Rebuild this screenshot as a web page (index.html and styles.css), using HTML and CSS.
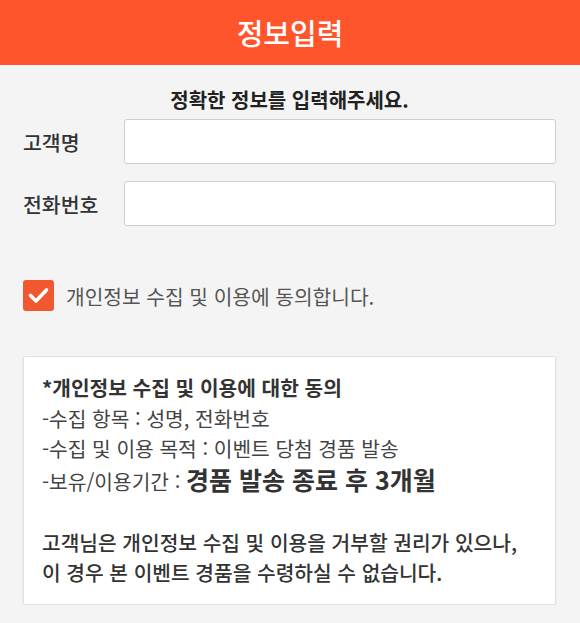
FILE: index.html
```html
<!DOCTYPE html>
<html lang="ko">
<head>
<meta charset="utf-8">
<title>정보입력</title>
<link rel="stylesheet" href="styles.css">
</head>
<body>
<header class="topbar"><h1 class="title">정보입력</h1></header>
<main class="content">
  <p class="subtitle">정확한 정보를 입력해주세요.</p>
  <div class="form">
    <label class="row">
      <span class="label">고객명</span>
      <input class="field" type="text">
    </label>
    <label class="row">
      <span class="label">전화번호</span>
      <input class="field" type="tel">
    </label>
  </div>
  <div class="agree">
    <span class="checkbox">
      <svg width="31" height="31" viewBox="0 0 31 31"><path d="M7.5 15.5 L13 21 L23.5 10" fill="none" stroke="#fff" stroke-width="3.6" stroke-linecap="round" stroke-linejoin="round"/></svg>
    </span>
    <span class="agree-text">개인정보 수집 및 이용에 동의합니다.</span>
  </div>
  <section class="notice">
    <p class="notice-title">*개인정보 수집 및 이용에 대한 동의</p>
    <p class="line">-수집 항목 : 성명, 전화번호</p>
    <p class="line">-수집 및 이용 목적 : 이벤트 당첨 경품 발송</p>
    <p class="line">-보유/이용기간 : <strong class="big">경품 발송 종료 후 3개월</strong></p>
    <p class="line blank">&nbsp;</p>
    <p class="line strong">고객님은 개인정보 수집 및 이용을 거부할 권리가 있으나,</p>
    <p class="line strong">이 경우 본 이벤트 경품을 수령하실 수 없습니다.</p>
  </section>
</main>
</body>
</html>
```
FILE: styles.css
```css
* { box-sizing: border-box; }
html, body {
  margin: 0;
  padding: 0;
  background: #f4f4f4;
  font-family: "Noto Sans CJK KR", "Noto Sans", sans-serif;
  color: #333;
}
.topbar {
  background: #ff552d;
  height: 65px;
  display: flex;
  align-items: center;
  justify-content: center;
}
.title {
  margin: 0;
  color: #fff;
  font-size: 29px;
  font-weight: 500;
  line-height: 1;
}
.content {
  padding: 0 24px 0 23px;
}
.subtitle {
  margin: 0;
  padding-top: 21px;
  text-align: center;
  font-size: 20px;
  font-weight: 700;
  color: #222;
  line-height: 28px;
}
.form {
  margin-top: 5px;
  display: flex;
  flex-direction: column;
  gap: 17px;
}
.row {
  display: flex;
  align-items: center;
}
.label {
  width: 101px;
  font-size: 20.5px;
  font-weight: 500;
  color: #333;
}
.field {
  flex: 1;
  height: 45px;
  border: 1px solid #cfcfcf;
  border-radius: 3px;
  background: #fff;
  margin: 0;
  padding: 0 10px;
}
.agree {
  margin-top: 54px;
  display: flex;
  align-items: center;
  gap: 12px;
}
.checkbox {
  width: 31px;
  height: 31px;
  border-radius: 3px;
  background: #f2582f;
  display: block;
}
.checkbox svg { display: block; }
.agree-text {
  font-size: 20.3px;
  font-weight: 400;
  color: #555;
  line-height: 28px;
}
.notice {
  margin-top: 45px;
  background: #fff;
  border: 1px solid #e2e2e2;
  border-radius: 2px;
  box-shadow: 0 1px 2px rgba(0,0,0,0.08);
  padding: 15px 18px 16px 18px;
}
.notice p {
  margin: 0;
  font-size: 20.3px;
  line-height: 30.5px;
  color: #444;
}
.notice .notice-title {
  font-weight: 700;
  color: #333;
}
.notice .big {
  font-size: 25px;
  font-weight: 700;
  color: #333;
  line-height: 30px;
}
.notice .strong {
  font-weight: 500;
  color: #333;
}
```
